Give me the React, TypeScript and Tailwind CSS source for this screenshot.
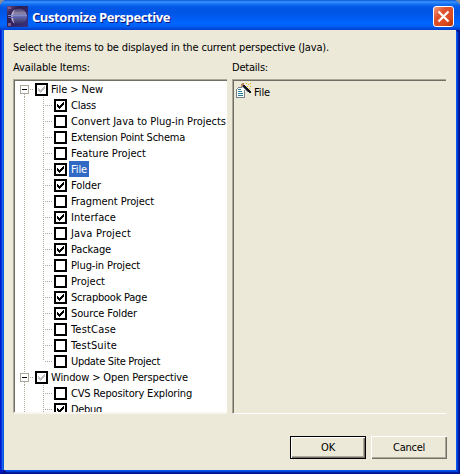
import { useLayoutEffect, useRef, useState } from "react";

/** Single line label whose letters are spaced to fill the given width. */
function Label({ text, width, className = "" }: { text: string; width: number; className?: string }) {
  const ref = useRef<HTMLSpanElement>(null);
  const [spacing, setSpacing] = useState(0);
  useLayoutEffect(() => {
    if (ref.current) {
      const natural = ref.current.getBoundingClientRect().width;
      setSpacing((width - natural) / text.length);
    }
  }, [text, width]);
  return (
    <span ref={ref} className={`inline-block shrink-0 whitespace-pre ${className}`} style={{ letterSpacing: spacing }}>
      {text}
    </span>
  );
}

type State = "on" | "off" | "grey";

function CheckBox({ state }: { state: State }) {
  return (
    <span className="flex h-[13px] w-[13px] shrink-0 items-center justify-center border-2 border-black bg-white">
      {state !== "off" && (
        <svg width="9" height="9" viewBox="0 0 9 9" shapeRendering="crispEdges" fill={state === "on" ? "#000" : "#c0c0c0"}>
          <path d="M1 3h1v3H1zM2 4h1v3H2zM3 5h1v3H3zM4 4h1v3H4zM5 3h1v3H5zM6 2h1v3H6zM7 1h1v3H7z" />
        </svg>
      )}
    </span>
  );
}

const vDots = "w-px shrink-0 bg-[linear-gradient(#aca899_50%,transparent_50%)] bg-[length:1px_2px]";
const hDots = "h-px shrink-0 bg-[linear-gradient(90deg,#aca899_50%,transparent_50%)] bg-[length:2px_1px]";

function GroupRow({ text, width, first }: { text: string; width: number; first?: boolean }) {
  return (
    <div className="flex h-4 items-center">
      <div className="ml-[5px] flex h-4 w-[9px] shrink-0 flex-col items-center">
        <span className={first ? "h-1" : `${vDots} h-1`} />
        <span className="flex h-[9px] w-[9px] items-center justify-center border border-[#aca899] bg-white">
          <span className="h-px w-[5px] bg-black" />
        </span>
        <span className={`${vDots} h-[3px]`} />
      </div>
      <span className={`${hDots} ml-px mr-px w-1`} />
      <span className="mt-px">
        <CheckBox state="grey" />
      </span>
      <Label text={text} width={width} className="ml-[3px] mt-0.5 leading-4" />
    </div>
  );
}

function ItemRow({ text, width, on, selected, last }: Item) {
  return (
    <div className="flex h-4 items-center">
      <span className={`${vDots} ml-[9px] h-4`} />
      <span className={`${vDots} ml-[18px] self-start ${last ? "h-2" : "h-4"}`} />
      <span className={`${hDots} ml-px mr-px w-2`} />
      <span className="mt-px">
        <CheckBox state={on ? "on" : "off"} />
      </span>
      <span className={`ml-0.5 flex h-4 pl-0.5 pr-[2px] ${selected ? "bg-[#316ac5] text-white" : ""}`}>
        <Label text={text} width={width} className="leading-[18px]" />
      </span>
    </div>
  );
}

type Item = { text: string; width: number; on?: boolean; selected?: boolean; last?: boolean };

const fileNew: Item[] = [
  { text: "Class", width: 25, on: true },
  { text: "Convert Java to Plug-in Projects", width: 155 },
  { text: "Extension Point Schema", width: 114 },
  { text: "Feature Project", width: 75 },
  { text: "File", width: 16, on: true, selected: true },
  { text: "Folder", width: 30, on: true },
  { text: "Fragment Project", width: 83 },
  { text: "Interface", width: 45, on: true },
  { text: "Java Project", width: 60 },
  { text: "Package", width: 40, on: true },
  { text: "Plug-in Project", width: 69 },
  { text: "Project", width: 34 },
  { text: "Scrapbook Page", width: 76, on: true },
  { text: "Source Folder", width: 66, on: true },
  { text: "TestCase", width: 45 },
  { text: "TestSuite", width: 46 },
  { text: "Update Site Project", width: 89, last: true },
];

const perspectives: Item[] = [
  { text: "CVS Repository Exploring", width: 121 },
  { text: "Debug", width: 31, on: true },
];

function EclipseLogo() {
  return (
    <svg width="21" height="21" viewBox="0 0 21 21">
      <defs>
        <linearGradient id="sky" x1="0" y1="0" x2="1" y2="1">
          <stop offset="0" stopColor="#6b4f88" />
          <stop offset=".3" stopColor="#2c1d50" />
          <stop offset="1" stopColor="#3b3080" />
        </linearGradient>
        <linearGradient id="moon" x1="0" y1="0" x2="0" y2="1">
          <stop offset="0" stopColor="#3f3768" />
          <stop offset=".3" stopColor="#8d86aa" />
          <stop offset=".5" stopColor="#6d6ca4" />
          <stop offset="1" stopColor="#2c2560" />
        </linearGradient>
      </defs>
      <path d="M0 0h21v21H0z" fill="url(#sky)" />
      <path d="M1 1h3v2H1zM1 17h3v3H1z" fill="#825d86" />
      <circle cx="12" cy="10.500" r="8" fill="url(#moon)" />
      <path d="M8 3.500C3 6 3 15 7.500 17.500C5.500 13 5.500 8 8 3.500" fill="#b9a9c8" />
      <path d="M1 9.500h19" stroke="#7f8ccc" />
      <path d="M1 11.500h19" stroke="#5360b4" />
    </svg>
  );
}

function NewFileIcon() {
  return (
    <svg width="17" height="16" viewBox="0 0 17 16" shapeRendering="crispEdges">
      <path d="M1 5h9v10H1z" fill="#fff" />
      <path d="M3 4h4v1H3zM2 5h1v1H2zM1 6h1v9H1zM1 14h9v1H1zM9 7h1v8H9z" fill="#75808c" />
      <path d="M3 6h3v1H3zM3 8h4v1H3zM3 10h5v1H3zM3 12h5v1H3z" fill="#247f96" />
      <path d="M7 0h2v1H7zM6 1h3v1H6zM6 2h2v1H6zM6 3h1v1H6z" fill="#b88661" />
      <path d="M8 2h2v1H8zM8 3h3v1H8zM9 4h3v1H9zM10 5h3v1h-3zM11 6h3v1h-3zM12 7h3v1h-3zM13 8h3v1h-3zM14 9h2v1h-2z" fill="#15151c" />
      <path d="M7 3h1v1H7zM8 4h1v1H8zM9 5h1v1H9zM10 6h1v1h-1zM11 7h1v1h-1zM12 8h1v1h-1z" fill="#6b7f98" />
      <path d="M11 0h1v1h-1zM15 0h1v1h-1zM13 1h1v1h-1zM12 3h1v1h-1zM15 3h1v1h-1zM14 5h1v1h-1z" fill="#e8b800" />
    </svg>
  );
}

const sunken = "border-t border-l border-t-[#aca899] border-l-[#aca899] pt-px pl-px shadow-[inset_1px_1px_0_#716f64]";

export default function App() {
  return (
    <div className="h-[474px] w-[460px] bg-[#8e9194]">
      <div className="flex h-[474px] w-[460px] flex-col overflow-hidden rounded-t-[7px] bg-[#0831d9] font-['DejaVu_Sans_Condensed','DejaVu_Sans',sans-serif] text-[11px] text-black">
        <header className="flex h-[30px] shrink-0 items-start bg-[linear-gradient(#0b57d8_0px,#3a93ff_2px,#1473f2_4px,#0458e6_7px,#0054e3_12px,#005cf4_18px,#0066ff_23px,#0062f8_26px,#0047d4_29px,#003dd7_30px)] pl-[7px] pr-[6px]">
          <span className="mt-1.5">
            <EclipseLogo />
          </span>
          <Label
            text="Customize Perspective"
            width={138}
            className="ml-1 mt-2 font-['Open_Sans',sans-serif] text-[13px] font-bold leading-[18px] text-white [text-shadow:1px_1px_0_#0a1883]"
          />
          <span className="ml-auto mt-1.5 flex h-[21px] w-[21px] items-center justify-center rounded-[3px] border border-white bg-[linear-gradient(135deg,#ef9a7e,#e0532d_35%,#dc4a20_70%,#b83208)]">
            <svg width="13" height="13" viewBox="0 0 13 13" stroke="#fff" strokeWidth="2.200">
              <path d="M1.500 1.500l10 10M11.500 1.500l-10 10" />
            </svg>
          </span>
        </header>
        <div className="h-[444px] border-x-4 border-b-4 border-l-[#0019cf] border-r-[#00138c] border-b-[#00138c]">
          <main className="flex h-[440px] flex-col bg-[#ece9d8] pl-[9px] shadow-[-1px_0_0_#0855dd,-2px_0_0_#166aee,-3px_0_0_#0831d9,1px_1px_0_#0855ee,2px_2px_0_#0441d8,3px_3px_0_#001ea0]">
            <Label text="Select the items to be displayed in the current perspective (Java)." width={316} className="mt-[10px] self-start leading-4" />
            <div className="mt-1 flex h-4">
              <div className="w-[219px]">
                <Label text="Available Items:" width={77} className="leading-4" />
              </div>
              <Label text="Details:" width={36} className="leading-4" />
            </div>
            <div className="mt-[3px] flex h-[335px] gap-[5px]">
              <div className={`${sunken} w-[214px] overflow-hidden border-b-2 border-b-[#f8f6ee] bg-white`}>
                <GroupRow text="File > New" width={52} first />
                {fileNew.map((item) => (
                  <ItemRow key={item.text} {...item} />
                ))}
                <GroupRow text="Window > Open Perspective" width={137} />
                {perspectives.map((item) => (
                  <ItemRow key={item.text} {...item} />
                ))}
              </div>
              <div className={`${sunken} flex w-[214px] items-start border-b border-b-white`}>
                <span className="ml-px mt-0.5">
                  <NewFileIcon />
                </span>
                <Label text="File" width={16} className="ml-[2px] mt-1 leading-4" />
              </div>
            </div>
            <div className="mt-[22px] flex gap-[5px] pl-[277px]">
              <button className="flex h-[23px] w-[76px] items-center justify-center border border-black shadow-[inset_1px_1px_0_#fff,inset_-1px_-1px_0_#716f64,inset_-2px_-2px_0_#aca899]">
                <Label text="OK" width={14} className="leading-4" />
              </button>
              <button className="flex h-[23px] w-[76px] items-center justify-center shadow-[inset_1px_1px_0_#fff,inset_-1px_-1px_0_#716f64,inset_-2px_-2px_0_#aca899]">
                <Label text="Cancel" width={32} className="leading-4" />
              </button>
            </div>
          </main>
        </div>
      </div>
    </div>
  );
}
